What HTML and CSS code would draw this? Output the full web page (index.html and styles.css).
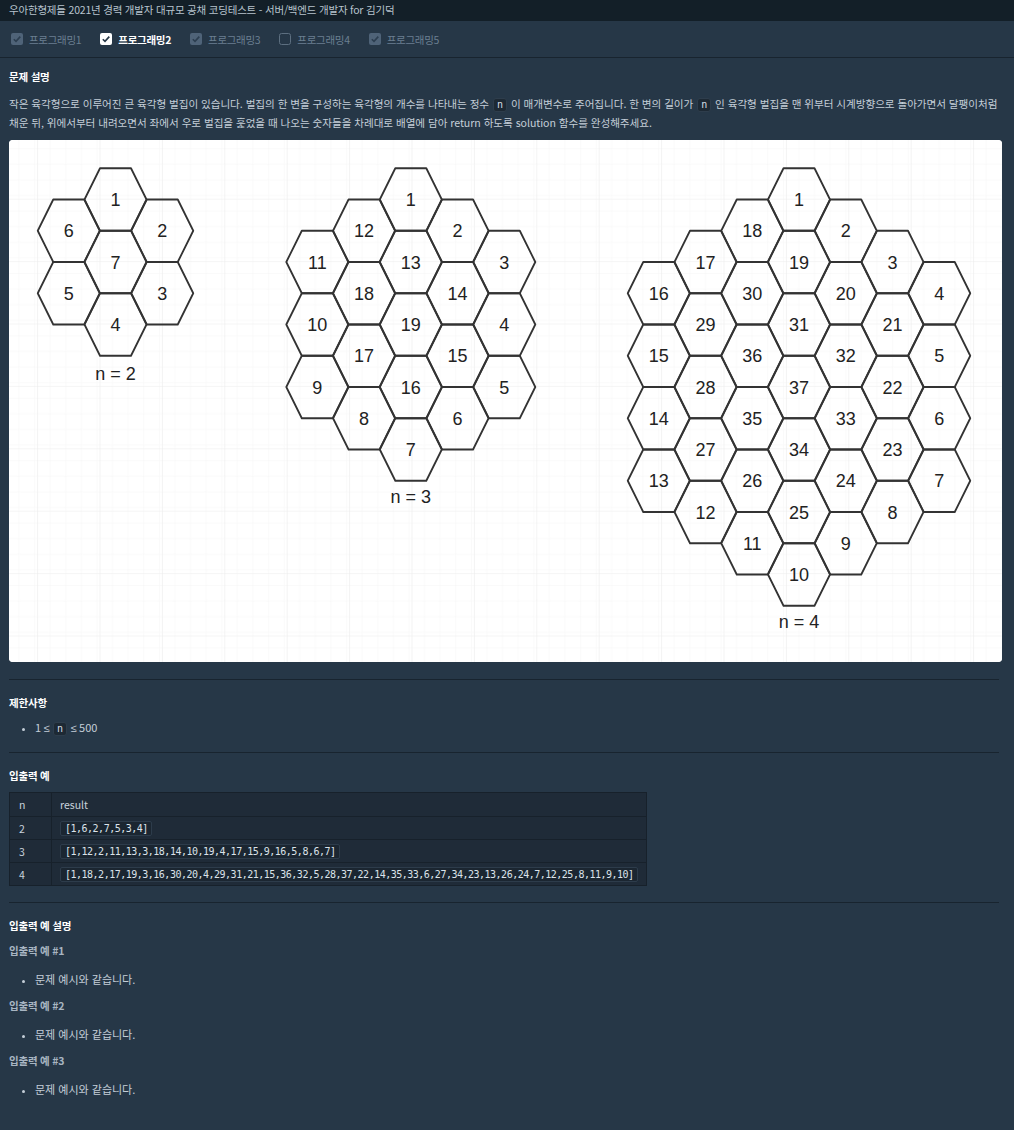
FILE: index.html
```html
<!DOCTYPE html>
<html lang="ko">
<head>
<meta charset="utf-8">
<title>육각형 벌집</title>
<link rel="stylesheet" href="styles.css">
</head>
<body>
<div class="topbar">우아한형제들 2021년 경력 개발자 대규모 공채 코딩테스트 - 서버/백엔드 개발자 for 김기덕</div>
<nav class="tabs">
  <div class="tab"><svg class="cb" viewBox="0 0 12 12"><rect class="cb-done" x="0" y="0" width="12" height="12" rx="2"/><path class="ck-done" d="M2.8 6.2 L5 8.4 L9.3 3.6"/></svg><span>프로그래밍1</span></div>
  <div class="tab active"><svg class="cb" viewBox="0 0 12 12"><rect class="cb-on" x="0" y="0" width="12" height="12" rx="2"/><path class="ck-on" d="M2.8 6.2 L5 8.4 L9.3 3.6"/></svg><span>프로그래밍2</span></div>
  <div class="tab"><svg class="cb" viewBox="0 0 12 12"><rect class="cb-done" x="0" y="0" width="12" height="12" rx="2"/><path class="ck-done" d="M2.8 6.2 L5 8.4 L9.3 3.6"/></svg><span>프로그래밍3</span></div>
  <div class="tab"><svg class="cb" viewBox="0 0 12 12"><rect class="cb-off" x="0.5" y="0.5" width="11" height="11" rx="2"/></svg><span>프로그래밍4</span></div>
  <div class="tab"><svg class="cb" viewBox="0 0 12 12"><rect class="cb-done" x="0" y="0" width="12" height="12" rx="2"/><path class="ck-done" d="M2.8 6.2 L5 8.4 L9.3 3.6"/></svg><span>프로그래밍5</span></div>
</nav>
<main class="content">
  <h4 class="h-first">문제 설명</h4>
  <p class="desc">작은 육각형으로 이루어진 큰 육각형 벌집이 있습니다. 벌집의 한 변을 구성하는 육각형의 개수를 나타내는 정수 <code class="ic">n</code> 이 매개변수로 주어집니다. 한 변의 길이가 <code class="ic">n</code> 인 육각형 벌집을 맨 위부터 시계방향으로 돌아가면서 달팽이처럼 채운 뒤, 위에서부터 내려오면서 좌에서 우로 벌집을 훑었을 때 나오는 숫자들을 차례대로 배열에 담아 return 하도록 solution 함수를 완성해주세요.</p>
  <div class="figure">
    <svg id="hexes" class="hexsvg" width="993" height="522" viewBox="0 0 993 522">
      <defs>
        <pattern id="minor" width="15.6" height="15.6" patternUnits="userSpaceOnUse" patternTransform="translate(28.1 58.7)">
          <path d="M0 0 H15.6 M0 0 V15.6" fill="none" stroke="#f5f5f5" stroke-width="1"/>
        </pattern>
        <pattern id="major" width="62.4" height="62.4" patternUnits="userSpaceOnUse" patternTransform="translate(28.1 58.7)">
          <rect width="62.4" height="62.4" fill="url(#minor)"/>
          <path d="M0 0 H62.4 M0 0 V62.4" fill="none" stroke="#ececec" stroke-width="1.2"/>
        </pattern>
      </defs>
      <rect width="993" height="522" fill="#ffffff"/>
      <rect width="993" height="522" fill="url(#major)"/>
      <g id="cells"></g>
      <text class="lbl" x="106.5" y="240">n = 2</text>
      <text class="lbl" x="401.8" y="363">n = 3</text>
      <text class="lbl" x="790" y="488">n = 4</text>
    </svg>
  </div>
  <hr class="sep">
  <h4>제한사항</h4>
  <ul class="list lim">
    <li>1 <span class="le">≤</span> <code class="ic">n</code> <span class="le">≤</span> 500</li>
  </ul>
  <hr class="sep">
  <h4>입출력 예</h4>
  <table class="io">
    <thead><tr><th class="c1">n</th><th>result</th></tr></thead>
    <tbody>
      <tr><td class="c1">2</td><td><code class="tc">[1,6,2,7,5,3,4]</code></td></tr>
      <tr><td class="c1">3</td><td><code class="tc">[1,12,2,11,13,3,18,14,10,19,4,17,15,9,16,5,8,6,7]</code></td></tr>
      <tr><td class="c1">4</td><td><code class="tc">[1,18,2,17,19,3,16,30,20,4,29,31,21,15,36,32,5,28,37,22,14,35,33,6,27,34,23,13,26,24,7,12,25,8,11,9,10]</code></td></tr>
    </tbody>
  </table>
  <hr class="sep sep-b">
  <h4>입출력 예 설명</h4>
  <h5>입출력 예 #1</h5>
  <ul class="list sub"><li>문제 예시와 같습니다.</li></ul>
  <h5>입출력 예 #2</h5>
  <ul class="list sub"><li>문제 예시와 같습니다.</li></ul>
  <h5>입출력 예 #3</h5>
  <ul class="list sub"><li>문제 예시와 같습니다.</li></ul>
</main>
<script src="hex.js"></script>
</body>
</html>
```
FILE: styles.css
```css
* { box-sizing: border-box; }
html, body { margin: 0; padding: 0; }
body {
  background: #263747;
  color: #c4ced8;
  font-family: "Noto Sans CJK KR", "Noto Sans", sans-serif;
  font-size: 11px;
  height: 1130px;
  overflow: hidden;
}
.topbar {
  height: 21px;
  line-height: 20px;
  background: #131f28;
  color: #b7c3cd;
  font-size: 10.5px;
  padding-left: 9px;
  letter-spacing: -0.2px;
}
.tabs {
  height: 37px;
  display: flex;
  align-items: center;
  gap: 19px;
  padding-left: 11px;
  border-bottom: 1px solid #18242f;
}
.tab {
  display: flex;
  align-items: center;
  gap: 6px;
  color: #6b7f91;
  font-size: 10.5px;
  letter-spacing: -0.3px;
}
.tab.active { color: #ffffff; font-weight: 700; }
.cb { width: 12px; height: 12px; display: block; }
.cb-done { fill: #4f6378; }
.ck-done { fill: none; stroke: #2c3e50; stroke-width: 1.6; }
.cb-on { fill: #ffffff; }
.ck-on { fill: none; stroke: #263747; stroke-width: 1.6; }
.cb-off { fill: none; stroke: #5d6f80; stroke-width: 1; }

.content { padding: 0 12px 0 9px; }
h4 {
  margin: 0;
  color: #ffffff;
  font-size: 10.5px;
  font-weight: 700;
  line-height: 16px;
  letter-spacing: -0.2px;
}
.h-first { margin-top: 11px; }
.desc {
  margin: 9px 0 0;
  font-size: 10.6px;
  line-height: 19px;
  letter-spacing: -0.05px;
  word-break: keep-all;
}
.ic {
  display: inline-block;
  font-family: "DejaVu Sans Mono", monospace;
  font-size: 10px;
  line-height: 12px;
  padding: 0 3px;
  margin: 0 1px;
  background: #1d2934;
  border: 1px solid #2e3d4c;
  border-radius: 3px;
  color: #d6dee6;
  letter-spacing: 0;
}
.figure {
  margin-top: 8px;
  width: 993px;
  height: 522px;
  border-radius: 4px;
  overflow: hidden;
  background: #fff;
}
.hexsvg { display: block; }
.hex { fill: none; stroke: #333333; stroke-width: 1.8; stroke-linejoin: round; }
.num, .lbl {
  font-family: "Liberation Sans", Arial, sans-serif;
  font-size: 18px;
  fill: #222222;
  text-anchor: middle;
}
.sep {
  border: 0;
  border-top: 1px solid #18242f;
  margin: 17px 3px 0 0;
}
.sep + h4 { margin-top: 15px; }
.list {
  margin: 8px 0 0;
  padding-left: 26px;
  line-height: 16px;
}
.list li::marker { font-size: 9px; color: #c4ced8; }
.le { font-family: "Noto Sans", sans-serif; font-size: 11px; }
.list + .sep { margin-top: 16px; }
.io {
  margin-top: 8px;
  border-collapse: collapse;
  background: #1f2b38;
  font-size: 10.5px;
  color: #c8d2dc;
}
.io th, .io td {
  border: 1px solid #17212b;
  text-align: left;
  font-weight: 400;
  padding: 0 8px;
  height: 23px;
}
.io th { height: 24px; }
.io .c1 { width: 42px; padding-left: 9px; }
.tc {
  display: inline-block;
  font-family: "DejaVu Sans Mono", monospace;
  font-size: 10px;
  letter-spacing: -0.5px;
  line-height: 13px;
  padding: 0 3px 0 4px;
  background: #1b2631;
  border: 1px solid #2d3c4b;
  border-radius: 2px;
  color: #dbe3ea;
}
.sep-b { margin-top: 16px; }
h5 {
  margin: 9px 0 0;
  font-size: 10.5px;
  font-weight: 700;
  color: #a8b5c2;
  line-height: 16px;
  letter-spacing: -0.2px;
}
.list.sub { margin: 12px 0 0; }
.list.sub + h5 { margin-top: 11px; }
```
FILE: hex.js
```js
(function () {
  var NS = 'http://www.w3.org/2000/svg';
  var g = document.getElementById('cells');
  var HW = 31, S = 15.5, HH = 31.25, DX = 46.75, TOP = 59.5;
  var boards = [
    { cx: 106.5, n: 2, order: [1,6,2,7,5,3,4] },
    { cx: 401.8, n: 3, order: [1,12,2,11,13,3,18,14,10,19,4,17,15,9,16,5,8,6,7] },
    { cx: 790, n: 4, order: [1,18,2,17,19,3,16,30,20,4,29,31,21,15,36,32,5,28,37,22,14,35,33,6,27,34,23,13,26,24,7,12,25,8,11,9,10] }
  ];
  boards.forEach(function (b) {
    var n = b.n, k = 0;
    for (var L = 0; L <= 4 * (n - 1); L++) {
      for (var c = -(n - 1); c <= n - 1; c++) {
        var a = Math.abs(c);
        if (L < a || (L - a) % 2 !== 0 || (L - a) / 2 > 2 * n - 2 - a) continue;
        var x = b.cx + c * DX, y = TOP + L * HH;
        var p = document.createElementNS(NS, 'polygon');
        p.setAttribute('class', 'hex');
        p.setAttribute('points', [
          (x - HW) + ',' + y, (x - S) + ',' + (y - HH), (x + S) + ',' + (y - HH),
          (x + HW) + ',' + y, (x + S) + ',' + (y + HH), (x - S) + ',' + (y + HH)
        ].join(' '));
        g.appendChild(p);
        var t = document.createElementNS(NS, 'text');
        t.setAttribute('class', 'num');
        t.setAttribute('x', x);
        t.setAttribute('y', y + 6.5);
        t.textContent = String(b.order[k++]);
        g.appendChild(t);
      }
    }
  });
})();
```
